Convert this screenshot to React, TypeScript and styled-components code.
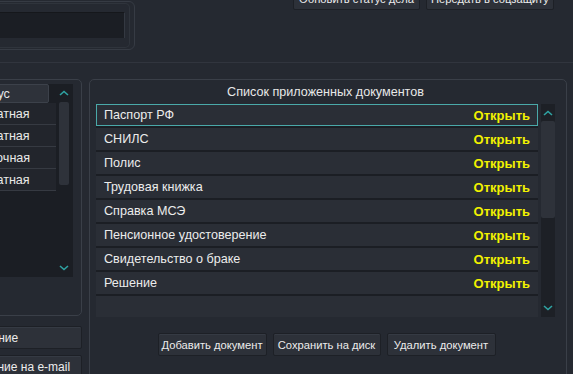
import React from "react";
import styled, { createGlobalStyle } from "styled-components";

const Global = createGlobalStyle`
  html, body { margin: 0; padding: 0; background: #252931; }
  body { width: 573px; height: 374px; overflow: hidden; font-family: "Liberation Sans", Arial, sans-serif; }
  * { box-sizing: border-box; }
`;

const Page = styled.div`
  width: 573px;
  height: 374px;
  overflow: hidden;
  background: #252931;
  display: flex;
  flex-direction: column;
  color: #e8e8e8;
`;

const TopArea = styled.div`
  height: 63px;
  flex: none;
  border-bottom: 1px solid #31353e;
  display: flex;
  justify-content: space-between;
  align-items: flex-start;
`;

const TopBox = styled.div`
  width: 300px;
  margin-left: -165px;
  margin-top: 1px;
  height: 49px;
  border: 1px solid #363b44;
  border-radius: 6px;
  padding: 1px 4px 1px 0;
`;

const TopInner = styled.div`
  height: 100%;
  border: 1px solid #2f343c;
  border-left: none;
  border-radius: 0 5px 5px 0;
  padding: 8px 4px 0 0;
`;

const DarkInput = styled.div`
  height: 26px;
  background: #1b1e24;
  border-top: 1px solid #15171b;
  border-right: 1px solid #343942;
`;

const TopButtons = styled.div`
  display: flex;
  gap: 6px;
  margin-right: 19px;
  margin-top: -13px;
`;

const Button = styled.button<{ $w?: number }>`
  height: 23px;
  width: ${(p) => (p.$w ? `${p.$w}px` : "auto")};
  padding: 0 4px;
  background: #2d3139;
  border: 1px solid #1d2026;
  border-radius: 2px;
  box-shadow: inset 0 1px 0 #353a43;
  color: #ececec;
  font-family: "Liberation Sans", Arial, sans-serif;
  font-size: 11.2px;
  white-space: nowrap;
  display: flex;
  align-items: center;
  justify-content: center;
`;

const Main = styled.div`
  display: flex;
  gap: 7px;
  padding-top: 16px;
`;

const LeftCol = styled.div`
  width: 240px;
  margin-left: -158px;
  flex: none;
  display: flex;
  flex-direction: column;
`;

const GroupBox = styled.div`
  border: 1px solid #3a3f48;
  border-radius: 5px;
`;

const LeftGroup = styled(GroupBox)`
  height: 237px;
  padding: 4px 8px 0 0;
`;

const Table = styled.div`
  height: 193px;
  background: #1b1e24;
  display: flex;
  padding-right: 1px;
`;

const TableBody = styled.div`
  flex: 1;
  display: flex;
  flex-direction: column;
`;

const HeaderRow = styled.div`
  height: 19px;
  display: grid;
  grid-template-columns: 88px 118px;
`;

const HeaderCell = styled.div`
  background: #2e323a;
  border: 1px solid #3c414a;
  border-radius: 2px;
  font-size: 12.6px;
  display: flex;
  align-items: center;
  justify-content: center;
`;

const LeftRow = styled.div`
  height: 22px;
  display: grid;
  grid-template-columns: 88px 1fr;
  background: #22252c;
  border-bottom: 1px solid #363a42;
  font-size: 12.6px;
  align-items: center;
`;

const StatusCell = styled.div`
  padding-left: 49px;
  white-space: nowrap;
`;

const ScrollBar = styled.div<{ $w: number }>`
  width: ${(p) => p.$w}px;
  flex: none;
  display: flex;
  flex-direction: column;
  align-items: center;
`;

const ArrowSlot = styled.div<{ $h?: number }>`
  height: ${(p) => p.$h ?? 18}px;
  flex: none;
  width: 100%;
  display: flex;
  align-items: center;
  justify-content: center;
`;

const Track = styled.div<{ $inset?: number }>`
  flex: 1;
  width: 100%;
  padding: 0 ${(p) => p.$inset ?? 0}px;
  display: flex;
  flex-direction: column;
`;

const Thumb = styled.div<{ $h: number }>`
  height: ${(p) => p.$h}px;
  background: #2e323a;
  border-radius: 2px;
`;

const LeftButton = styled(Button)`
  width: 100%;
  justify-content: flex-start;
  padding-left: 100px;
  font-size: 12px;
  margin-top: 6px;
  &:first-of-type { margin-top: 10px; }
`;

const RightGroup = styled(GroupBox)`
  width: 478px;
  height: 320px;
  flex: none;
  padding: 0 11px 0 6px;
  display: flex;
  flex-direction: column;
`;

const Title = styled.div`
  height: 24px;
  font-size: 12.6px;
  display: flex;
  align-items: center;
  justify-content: center;
  padding-top: 0px;
`;

const ListArea = styled.div`
  height: 213px;
  display: flex;
  gap: 3px;
`;

const List = styled.div`
  flex: 1;
  background: #1b1e24;
  display: flex;
  flex-direction: column;
  gap: 2px;
  overflow: hidden;
`;

const DocRow = styled.div<{ $selected?: boolean }>`
  height: 22px;
  flex: none;
  display: flex;
  align-items: center;
  justify-content: space-between;
  padding: 0 7px;
  background: #2a2e36;
  border: 1px solid ${(p) => (p.$selected ? "#4aa9a9" : "#2a2e36")};
  font-size: 12.6px;
  color: #ececec;
`;

const OpenLink = styled.span`
  font-weight: bold;
  color: #f2f200;
  font-size: 13px;
`;

const DocScroll = styled(ScrollBar)`
  background: #1d2026;
`;

const BottomButtons = styled.div`
  display: flex;
  justify-content: center;
  gap: 6px;
  margin-top: 16px;
  padding-left: 2px;
`;

const Chevron = ({ up }: { up?: boolean }) => (
  <svg width="10" height="6" viewBox="0 0 10 6">
    <polyline
      points={up ? "1,5 5,1.5 9,5" : "1,1 5,4.5 9,1"}
      fill="none"
      stroke="#2fa3a3"
      strokeWidth="1.6"
    />
  </svg>
);

const docs = [
  "Паспорт РФ",
  "СНИЛС",
  "Полис",
  "Трудовая книжка",
  "Справка МСЭ",
  "Пенсионное удостоверение",
  "Свидетельство о браке",
  "Решение",
];

const statuses = ["Платная", "Платная", "Срочная", "Платная"];

export default function App() {
  return (
    <Page>
      <Global />
      <TopArea>
        <TopBox>
          <TopInner>
            <DarkInput />
          </TopInner>
        </TopBox>
        <TopButtons>
          <Button $w={127}>Обновить статус дела</Button>
          <Button $w={128}>Передать в соцзащиту</Button>
        </TopButtons>
      </TopArea>
      <Main>
        <LeftCol>
          <LeftGroup>
            <Table>
              <TableBody>
                <HeaderRow>
                  <HeaderCell>ФИО</HeaderCell>
                  <HeaderCell>Статус</HeaderCell>
                </HeaderRow>
                {statuses.map((s, i) => (
                  <LeftRow key={i}>
                    <div />
                    <StatusCell>{s}</StatusCell>
                  </LeftRow>
                ))}
              </TableBody>
              <ScrollBar $w={16}>
                <ArrowSlot>
                  <Chevron up />
                </ArrowSlot>
                <Track $inset={3}>
                  <Thumb $h={83} />
                </Track>
                <ArrowSlot>
                  <Chevron />
                </ArrowSlot>
              </ScrollBar>
            </Table>
          </LeftGroup>
          <LeftButton>Уведомление</LeftButton>
          <LeftButton>Отправление на e-mail</LeftButton>
        </LeftCol>
        <RightGroup>
          <Title>Список приложенных документов</Title>
          <ListArea>
            <List>
              {docs.map((d, i) => (
                <DocRow key={d} $selected={i === 0}>
                  <span>{d}</span>
                  <OpenLink>Открыть</OpenLink>
                </DocRow>
              ))}
              <DocRow />
            </List>
            <DocScroll $w={14}>
              <ArrowSlot $h={17}>
                <Chevron up />
              </ArrowSlot>
              <Track>
                <Thumb $h={97} />
              </Track>
              <ArrowSlot>
                <Chevron />
              </ArrowSlot>
            </DocScroll>
          </ListArea>
          <BottomButtons>
            <Button $w={109}>Добавить документ</Button>
            <Button $w={108}>Сохранить на диск</Button>
            <Button $w={109}>Удалить документ</Button>
          </BottomButtons>
        </RightGroup>
      </Main>
    </Page>
  );
}
